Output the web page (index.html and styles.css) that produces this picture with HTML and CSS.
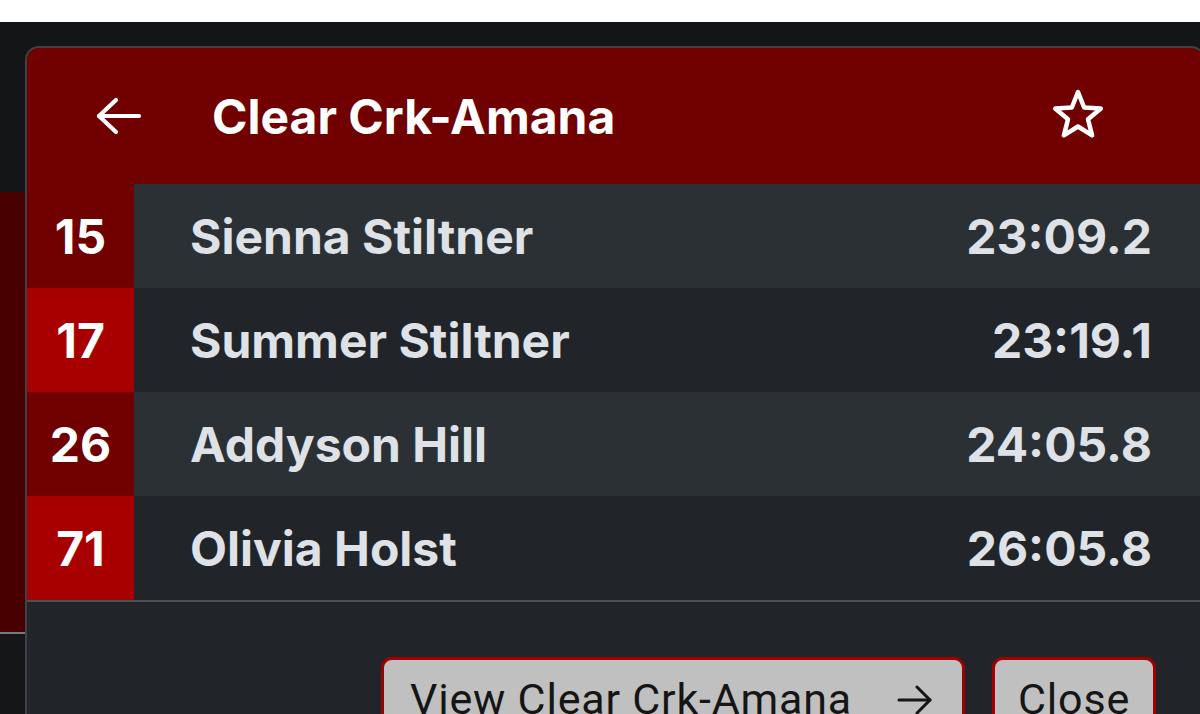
FILE: index.html
```html
<!DOCTYPE html>
<html lang="en">
<head>
<meta charset="utf-8">
<title>Clear Crk-Amana</title>
<link rel="stylesheet" href="styles.css">
</head>
<body>
<div class="topbar"></div>
<div class="screen">
  <div class="appbar"></div>
  <div class="hero"></div>
  <div class="rest"></div>

  <div class="modal">
    <div class="modal-header">
      <svg class="back" width="48" height="48" viewBox="0 0 48 48" fill="none" stroke="#fff" stroke-width="4.2" stroke-linecap="round" stroke-linejoin="round">
        <path d="M45 24H5"/>
        <path d="M22 8L5 24l17 16"/>
      </svg>
      <h1 class="title">Clear Crk-Amana</h1>
      <svg class="star" width="56" height="56" viewBox="0 0 56 56" fill="none" stroke="#fff" stroke-width="4.5" stroke-linejoin="round">
        <polygon points="28,6 34.17,21.51 50.83,22.58 37.99,33.24 42.11,49.42 28,40.5 13.89,49.42 18.01,33.24 5.17,22.58 21.83,21.51"/>
      </svg>
    </div>

    <div class="rows">
      <div class="row odd">
        <div class="rank">15</div>
        <div class="name">Sienna Stiltner</div>
        <div class="time">23:09.2</div>
      </div>
      <div class="row even">
        <div class="rank">17</div>
        <div class="name">Summer Stiltner</div>
        <div class="time">23:19.1</div>
      </div>
      <div class="row odd">
        <div class="rank">26</div>
        <div class="name">Addyson Hill</div>
        <div class="time">24:05.8</div>
      </div>
      <div class="row even">
        <div class="rank">71</div>
        <div class="name">Olivia Holst</div>
        <div class="time">26:05.8</div>
      </div>
    </div>

    <div class="modal-footer">
      <button class="btn btn-view">
        <span class="btn-label">View Clear Crk-Amana</span>
        <svg class="arrow" width="38" height="32" viewBox="0 0 38 32" fill="none" stroke="#151515" stroke-width="3" stroke-linecap="round" stroke-linejoin="round">
          <path d="M3 16H34"/>
          <path d="M21 3L34 16 21 29"/>
        </svg>
      </button>
      <button class="btn btn-close"><span class="btn-label">Close</span></button>
    </div>
  </div>
</div>
</body>
</html>
```

FILE: styles.css
```css
* { box-sizing: border-box; }

html, body {
  margin: 0;
  padding: 0;
  width: 1200px;
  height: 714px;
  overflow: hidden;
  background: #ffffff;
  font-family: Inter, "Liberation Sans", Arial, sans-serif;
}

.topbar {
  height: 22px;
  background: #ffffff;
}

.screen {
  position: relative;
  height: 692px;
  background: #131517;
  display: flex;
  flex-direction: column;
}

.appbar {
  height: 170px;
  background: #131517;
}

.hero {
  height: 442px;
  background: #490000;
  border-bottom: 2px solid #77787a;
}

.rest {
  flex: 1;
  background: #141618;
}

.modal {
  position: absolute;
  left: 25px;
  top: 24px;
  width: 1180px;
  height: 720px;
  border: 2px solid #3e4145;
  border-radius: 14px;
  overflow: hidden;
  background: #212529;
  display: flex;
  flex-direction: column;
}

.modal-header {
  height: 136px;
  flex: none;
  background: #710000;
  display: flex;
  align-items: center;
  padding: 0 97px 0 67px;
}

.back { flex: none; }

.title {
  margin: 0 0 0 70px;
  flex: 1;
  color: #ffffff;
  font-size: 48px;
  font-weight: 700;
}

.star { flex: none; margin-top: -4px; }

.rows { flex: none; }

.row {
  height: 104px;
  display: flex;
  align-items: center;
  font-size: 48px;
  font-weight: 700;
}

.row.odd { background: #2b3035; }
.row.even { background: #212529; }

.rank {
  width: 107px;
  height: 100%;
  flex: none;
  display: flex;
  align-items: center;
  justify-content: center;
  color: #ffffff;
}

.row.odd .rank { background: #710000; }
.row.even .rank { background: #a80000; }

.name {
  flex: 1;
  padding-left: 56px;
  color: #dee2e6;
}

.time {
  flex: none;
  padding-right: 51px;
  color: #dee2e6;
}

.modal-footer {
  flex: 1;
  border-top: 2px solid #4b4f54;
  display: flex;
  justify-content: flex-end;
  align-items: flex-start;
  gap: 27px;
  padding: 55px 47px 0 0;
}

.btn {
  height: 90px;
  background: #c0c0c0;
  border: 3px solid #a10000;
  border-radius: 11px;
  color: #151515;
  font-family: Roboto, "Liberation Sans", Arial, sans-serif;
  font-size: 43px;
  font-weight: 400;
  letter-spacing: 0.8px;
  line-height: 1.2;
  padding: 14px 26px 0;
  display: flex;
  align-items: flex-start;
}

.btn-view {
  width: 584px;
  justify-content: space-between;
}

.btn-view .arrow {
  flex: none;
  margin: 10px 2px 0 0;
}

.btn-close {
  width: 164px;
  justify-content: center;
}
```
